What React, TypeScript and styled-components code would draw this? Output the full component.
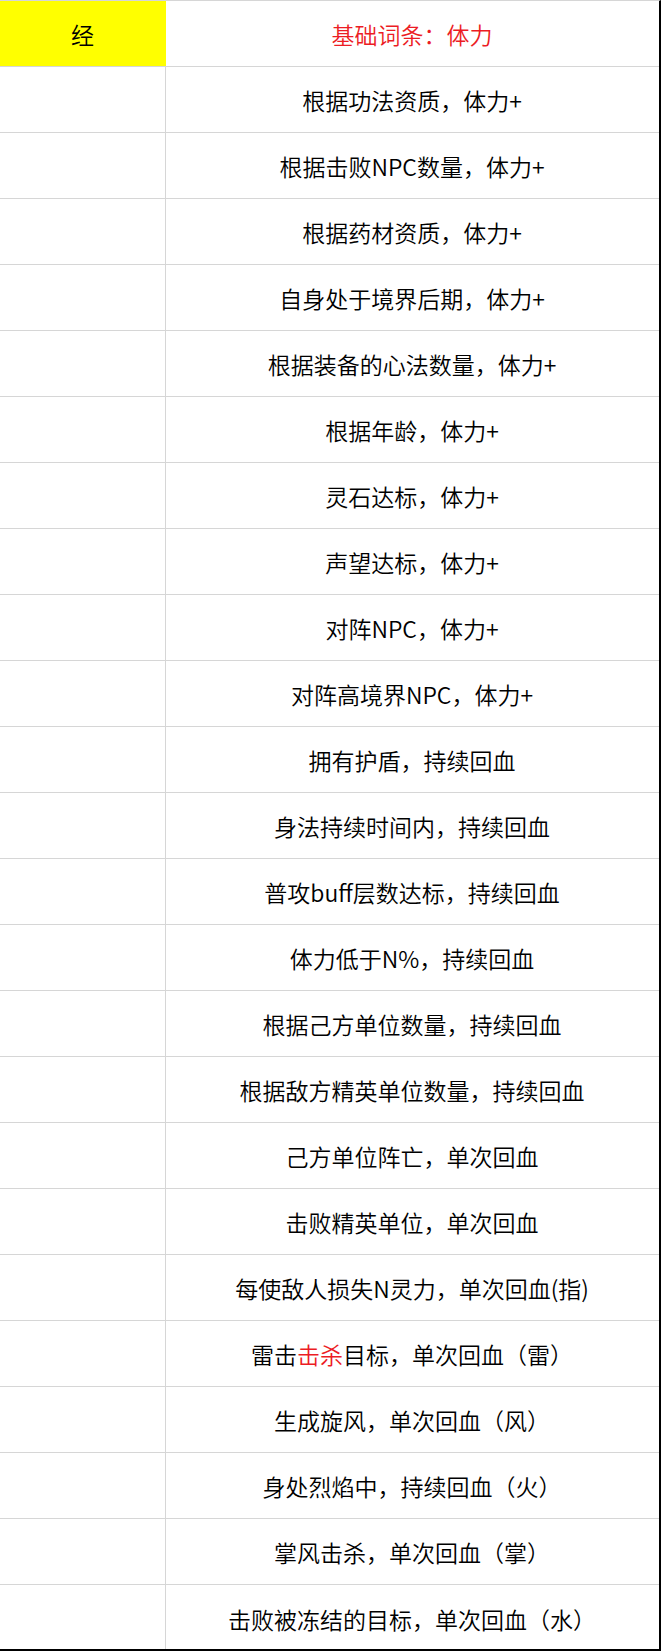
import * as React from "react";
import styled, { createGlobalStyle } from "styled-components";

// Spreadsheet-like sheet: a narrow label column and a wide, centred text column.

const GlobalStyle = createGlobalStyle`
  html, body {
    margin: 0;
    padding: 0;
    background: #ffffff;
  }
`;

const Sheet = styled.div`
  width: 661px;
  height: 1651px;
  box-sizing: border-box;
  border-top: 1px solid #d6d6d6;
  border-right: 2px solid #000000;
  border-bottom: 2px solid #000000;
  display: grid;
  grid-template-columns: 165px 1fr;
  grid-auto-rows: 66px;
  font-family: "Noto Sans CJK SC", "Noto Sans", sans-serif;
  font-size: 23px;
  font-weight: 350;
  color: #000000;
  overflow: hidden;
`;

const Cell = styled.div<{ $fill?: string; $last?: boolean }>`
  box-sizing: border-box;
  display: flex;
  align-items: center;
  justify-content: center;
  padding-top: 1px;
  white-space: nowrap;
  background: ${(p) => p.$fill ?? "transparent"};
  border-bottom: ${(p) => (p.$last ? "none" : "1px solid #d6d6d6")};
`;

const LabelCell = styled(Cell)`
  border-right: 1px solid ${(p) => p.$fill ?? "#d6d6d6"};
  width: 166px;
`;

const Red = styled.span`
  color: #ec1c24;
`;

interface IRow {
  text: React.ReactNode;
}

const rows: IRow[] = [
  { text: "根据功法资质，体力+" },
  { text: "根据击败NPC数量，体力+" },
  { text: "根据药材资质，体力+" },
  { text: "自身处于境界后期，体力+" },
  { text: "根据装备的心法数量，体力+" },
  { text: "根据年龄，体力+" },
  { text: "灵石达标，体力+" },
  { text: "声望达标，体力+" },
  { text: "对阵NPC，体力+" },
  { text: "对阵高境界NPC，体力+" },
  { text: "拥有护盾，持续回血" },
  { text: "身法持续时间内，持续回血" },
  { text: "普攻buff层数达标，持续回血" },
  { text: "体力低于N%，持续回血" },
  { text: "根据己方单位数量，持续回血" },
  { text: "根据敌方精英单位数量，持续回血" },
  { text: "己方单位阵亡，单次回血" },
  { text: "击败精英单位，单次回血" },
  { text: "每使敌人损失N灵力，单次回血(指)" },
  { text: <>雷击<Red>击杀</Red>目标，单次回血（雷）</> },
  { text: "生成旋风，单次回血（风）" },
  { text: "身处烈焰中，持续回血（火）" },
  { text: "掌风击杀，单次回血（掌）" },
  { text: "击败被冻结的目标，单次回血（水）" },
];

export default function App() {
  return (
    <>
      <GlobalStyle />
      <Sheet>
        <LabelCell $fill="#ffff00">经</LabelCell>
        <Cell><Red>基础词条：体力</Red></Cell>
        {rows.map((row, i) => {
          const last = i === rows.length - 1;
          return (
            <React.Fragment key={i}>
              <LabelCell $last={last} />
              <Cell $last={last}>{row.text}</Cell>
            </React.Fragment>
          );
        })}
      </Sheet>
    </>
  );
}
